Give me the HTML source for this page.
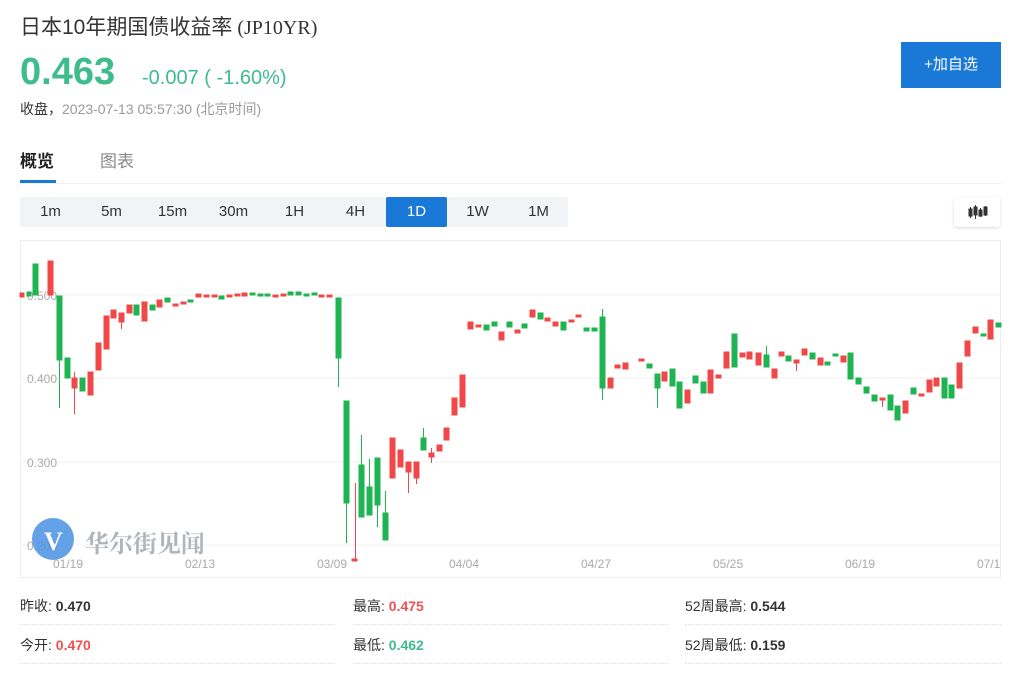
<!DOCTYPE html><html><head><meta charset="utf-8"><style>
body{margin:0;width:1024px;height:674px;background:#fff;font-family:"Liberation Sans","Noto Sans CJK SC",sans-serif;position:relative;overflow:hidden;color:#333}
.a{position:absolute;white-space:nowrap}
.tf{position:absolute;top:197px;height:30px;line-height:30px;font-size:15px;text-align:center;color:#333;width:61px}
.st{font-size:14px;color:#333}.st b{font-weight:bold}
.dl{position:absolute;height:0;border-top:1px dotted #ddd}
</style></head><body>
<div class="a" style="left:20px;top:11px;font-size:21px;color:#333">日本10年期国债收益率<span style="font-family:'Liberation Serif',serif;font-size:20px"> (JP10YR)</span></div>
<div class="a" style="left:20px;top:51px;font-size:38px;font-weight:bold;color:#3ebc8d">0.463</div>
<div class="a" style="left:142px;top:67px;font-size:20px;color:#3ebc8d">-0.007 ( -1.60%)</div>
<div class="a" style="left:20px;top:99px;font-size:14px;color:#333">收盘，<span style="color:#999">2023-07-13 05:57:30 (北京时间)</span></div>
<div class="a" style="left:901px;top:42px;width:100px;height:46px;background:#1a78d6;color:#fff;font-size:15px;line-height:46px;text-align:center">+加自选</div>
<div class="a" style="left:20px;top:147px;font-size:17px;font-weight:bold;color:#222">概览</div>
<div class="a" style="left:100px;top:147px;font-size:17px;color:#888">图表</div>
<div class="a" style="left:20px;top:180px;width:36px;height:3px;background:#1a78d6"></div>
<div class="a" style="left:20px;top:183px;width:981px;height:1px;background:#f0f0f0"></div>
<div class="a" style="left:20px;top:197px;width:548px;height:30px;background:#f2f3f5;border-radius:2px"></div>
<div class="tf" style="left:20px">1m</div><div class="tf" style="left:81px">5m</div><div class="tf" style="left:142px">15m</div><div class="tf" style="left:203px">30m</div><div class="tf" style="left:264px">1H</div><div class="tf" style="left:325px">4H</div>
<div class="tf" style="left:386px;background:#1a78d6;color:#fff;border-radius:2px">1D</div><div class="tf" style="left:447px">1W</div><div class="tf" style="left:508px">1M</div>
<div class="a" style="left:954px;top:197px;width:46px;height:30px;background:#fff;box-shadow:0 1px 3px rgba(0,0,0,.15);border-radius:3px">
<svg width="46" height="30"><g fill="#333" stroke="#333" stroke-width="1"><rect x="15" y="12" width="3" height="7"/><line x1="16.5" y1="10" x2="16.5" y2="21"/><rect x="20" y="10" width="3" height="8"/><line x1="21.5" y1="8" x2="21.5" y2="22"/><rect x="25" y="13" width="3" height="6"/><line x1="26.5" y1="11" x2="26.5" y2="20"/><rect x="30" y="10" width="3" height="8"/><line x1="31.5" y1="9" x2="31.5" y2="19"/></g></svg></div>
<svg class="a" style="left:0;top:0" width="1024" height="674">
<rect x="20.5" y="240.5" width="980" height="337" fill="none" stroke="#eee"/>
<g stroke="#f0f0f0"><line x1="21" y1="295" x2="1000" y2="295"/><line x1="21" y1="378" x2="1000" y2="378"/><line x1="21" y1="462" x2="1000" y2="462"/><line x1="21" y1="545" x2="1000" y2="545"/></g>
<g font-size="12" fill="#aaa" font-family="Liberation Sans,sans-serif"><text x="27" y="300">0.500</text><text x="27" y="383">0.400</text><text x="27" y="467">0.300</text><text x="27" y="550">0.200</text>
<text x="53" y="568">01/19</text><text x="185" y="568">02/13</text><text x="317" y="568">03/09</text><text x="449" y="568">04/04</text><text x="581" y="568">04/27</text><text x="713" y="568">05/25</text><text x="845" y="568">06/19</text><text x="977" y="568">07/1</text></g>
<circle cx="53" cy="539" r="21" fill="#4a90e2" opacity=".85"/><text x="44" y="550" font-size="26" fill="#fff" font-family="Liberation Serif,serif" font-weight="bold">V</text>
<text x="85" y="552" font-size="24" fill="#b0b5bd" font-family="Noto Serif CJK SC,serif" font-weight="bold">华尔街见闻</text>
<g fill="#f04848" stroke="#f04848" stroke-width="1">
<rect x="20" y="293" width="4" height="4"/><rect x="48" y="261" width="5" height="34"/><rect x="72" y="378" width="5" height="10"/><line x1="74.5" y1="372" x2="74.5" y2="414"/><rect x="88" y="372" width="5" height="23"/><rect x="96" y="343" width="5" height="27"/><rect x="104" y="316" width="5" height="33"/><rect x="111" y="310" width="5" height="8"/><rect x="119" y="313" width="5" height="9"/><line x1="121.5" y1="313" x2="121.5" y2="329"/><rect x="127" y="305" width="5" height="8"/><rect x="142" y="302" width="5" height="19"/><rect x="157" y="300" width="5" height="7"/><rect x="173" y="304" width="5" height="2"/><rect x="181" y="302" width="5" height="2"/>
<rect x="196" y="294" width="5" height="3"/><rect x="204" y="295" width="5" height="2"/><rect x="212" y="295" width="5" height="2"/><rect x="227" y="295" width="5" height="2"/><rect x="235" y="294" width="5" height="2"/><rect x="242" y="293" width="5" height="3"/><rect x="273" y="295" width="5" height="2"/><rect x="281" y="294" width="5" height="2"/><rect x="319" y="295" width="5" height="2"/><rect x="327" y="295" width="5" height="2"/>
<line x1="355.5" y1="483" x2="355.5" y2="561"/><rect x="352" y="559" width="5" height="2"/><rect x="390" y="438" width="5" height="40"/><rect x="398" y="450" width="5" height="17"/><rect x="406" y="462" width="5" height="10"/><line x1="408.5" y1="462" x2="408.5" y2="493"/><rect x="414" y="462" width="5" height="16"/><line x1="416.5" y1="462" x2="416.5" y2="484"/><rect x="429" y="453" width="5" height="4"/><line x1="431.5" y1="448" x2="431.5" y2="463"/><rect x="437" y="445" width="5" height="6"/><rect x="444" y="428" width="5" height="12"/><rect x="452" y="398" width="5" height="17"/><rect x="460" y="375" width="5" height="32"/>
<rect x="468" y="322" width="5" height="7"/><rect x="476" y="325" width="5" height="2"/><rect x="499" y="332" width="5" height="8"/><rect x="515" y="330" width="5" height="3"/><rect x="530" y="310" width="5" height="7"/><rect x="545" y="318" width="5" height="3"/><rect x="553" y="322" width="5" height="4"/><rect x="569" y="320" width="5" height="2"/><rect x="576" y="315" width="5" height="2"/>
<rect x="608" y="378" width="5" height="10"/><rect x="615" y="365" width="5" height="3"/><rect x="623" y="363" width="5" height="6"/><rect x="639" y="359" width="5" height="2"/><rect x="662" y="372" width="5" height="9"/><rect x="685" y="390" width="5" height="13"/><rect x="708" y="370" width="5" height="23"/><rect x="716" y="375" width="5" height="3"/><rect x="724" y="352" width="5" height="16"/><rect x="740" y="353" width="5" height="4"/><rect x="747" y="352" width="5" height="7"/><rect x="756" y="353" width="5" height="12"/><rect x="772" y="369" width="5" height="9"/><rect x="779" y="352" width="5" height="4"/><rect x="794" y="360" width="5" height="3"/><line x1="796.5" y1="360" x2="796.5" y2="371"/><rect x="802" y="349" width="5" height="6"/><rect x="818" y="358" width="5" height="7"/><rect x="841" y="356" width="5" height="6"/><rect x="880" y="398" width="5" height="2"/><line x1="882.5" y1="398" x2="882.5" y2="407"/><rect x="903" y="401" width="5" height="12"/><rect x="919" y="394" width="5" height="2"/><rect x="927" y="380" width="5" height="12"/><rect x="934" y="378" width="5" height="8"/><rect x="957" y="363" width="5" height="25"/><rect x="965" y="341" width="5" height="15"/><rect x="973" y="327" width="5" height="6"/><rect x="988" y="320" width="5" height="19"/></g>
<g fill="#1fb452" stroke="#1fb452" stroke-width="1">
<rect x="27" y="292" width="4" height="4"/><rect x="33" y="264" width="5" height="31"/><rect x="57" y="296" width="5" height="64"/><line x1="59.5" y1="296" x2="59.5" y2="408"/><rect x="65" y="358" width="5" height="20"/><rect x="80" y="378" width="5" height="13"/><rect x="134" y="305" width="5" height="10"/><rect x="150" y="305" width="5" height="5"/><rect x="165" y="298" width="5" height="4"/><rect x="188" y="300" width="5" height="2"/><rect x="219" y="296" width="5" height="3"/><rect x="250" y="293" width="5" height="2"/><rect x="258" y="294" width="5" height="2"/><rect x="265" y="294" width="5" height="2"/><rect x="288" y="292" width="5" height="3"/><rect x="296" y="292" width="5" height="3"/><rect x="304" y="294" width="5" height="2"/><rect x="312" y="293" width="5" height="2"/>
<rect x="336" y="298" width="5" height="60"/><line x1="338.5" y1="298" x2="338.5" y2="387"/><rect x="344" y="401" width="5" height="102"/><line x1="346.5" y1="401" x2="346.5" y2="543"/><rect x="359" y="465" width="5" height="52"/><line x1="361.5" y1="435" x2="361.5" y2="517"/><rect x="367" y="487" width="5" height="28"/><line x1="369.5" y1="459" x2="369.5" y2="515"/><rect x="375" y="458" width="5" height="47"/><line x1="377.5" y1="458" x2="377.5" y2="527"/><rect x="383" y="513" width="5" height="27"/><line x1="385.5" y1="491" x2="385.5" y2="540"/><rect x="421" y="438" width="5" height="12"/><line x1="423.5" y1="428" x2="423.5" y2="450"/>
<rect x="484" y="325" width="5" height="5"/><rect x="492" y="322" width="5" height="4"/><rect x="507" y="322" width="5" height="5"/><rect x="522" y="324" width="5" height="4"/><rect x="538" y="313" width="5" height="6"/><rect x="561" y="322" width="5" height="8"/><rect x="584" y="328" width="5" height="3"/><rect x="592" y="328" width="5" height="3"/><rect x="600" y="317" width="5" height="71"/><line x1="602.5" y1="309" x2="602.5" y2="400"/>
<rect x="647" y="364" width="5" height="4"/><rect x="655" y="374" width="5" height="14"/><line x1="657.5" y1="374" x2="657.5" y2="408"/><rect x="670" y="369" width="5" height="17"/><rect x="677" y="382" width="5" height="26"/><rect x="693" y="376" width="5" height="7"/><rect x="701" y="382" width="5" height="11"/><rect x="732" y="334" width="5" height="33"/><rect x="764" y="355" width="5" height="12"/><line x1="766.5" y1="346" x2="766.5" y2="367"/><rect x="786" y="356" width="5" height="5"/><rect x="810" y="353" width="5" height="6"/><rect x="825" y="362" width="5" height="3"/><rect x="833" y="354" width="5" height="2"/><rect x="848" y="353" width="5" height="26"/><rect x="856" y="378" width="5" height="6"/><rect x="864" y="387" width="5" height="6"/><rect x="872" y="395" width="5" height="6"/><rect x="888" y="395" width="5" height="15"/><rect x="895" y="406" width="5" height="14"/><rect x="911" y="388" width="5" height="6"/><rect x="942" y="378" width="5" height="20"/><rect x="949" y="385" width="5" height="13"/><rect x="981" y="334" width="5" height="2"/><rect x="996" y="323" width="5" height="4"/></g>
</svg>
<div class="a st" style="left:20px;top:596px">昨收: <b>0.470</b></div>
<div class="a st" style="left:353px;top:596px">最高: <b style="color:#f05050">0.475</b></div>
<div class="a st" style="left:685px;top:596px">52周最高: <b>0.544</b></div>
<div class="a st" style="left:20px;top:635px">今开: <b style="color:#f05050">0.470</b></div>
<div class="a st" style="left:353px;top:635px">最低: <b style="color:#3ebc8d">0.462</b></div>
<div class="a st" style="left:685px;top:635px">52周最低: <b>0.159</b></div>
<div class="dl" style="left:20px;top:624px;width:315px"></div><div class="dl" style="left:353px;top:624px;width:315px"></div><div class="dl" style="left:685px;top:624px;width:316px"></div>
<div class="dl" style="left:20px;top:663px;width:315px"></div><div class="dl" style="left:353px;top:663px;width:315px"></div><div class="dl" style="left:685px;top:663px;width:316px"></div>
</body></html>
